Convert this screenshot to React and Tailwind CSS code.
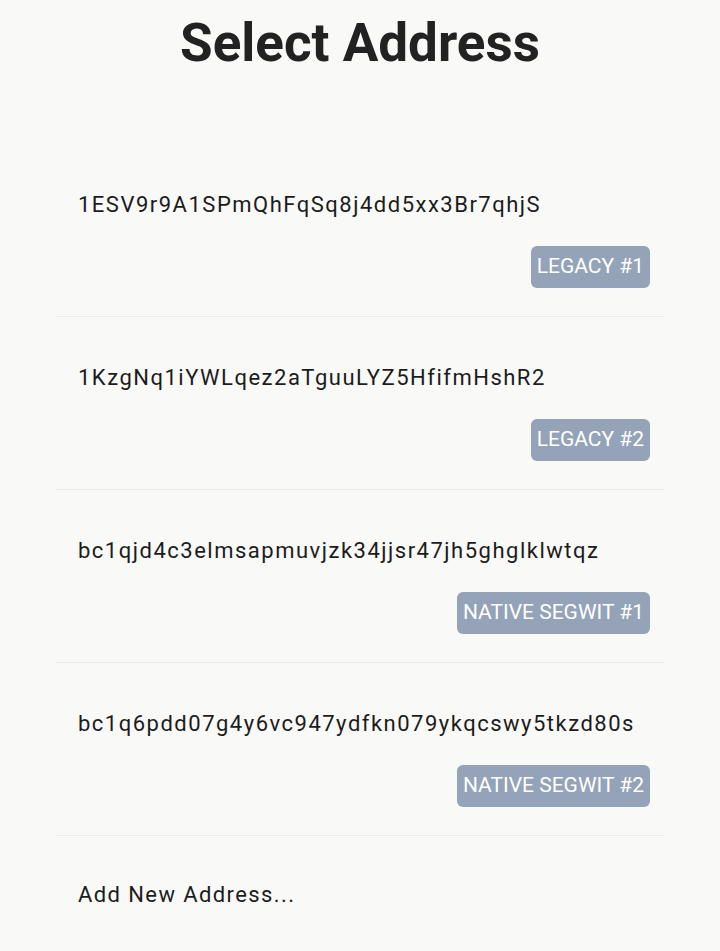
import React from 'react';

const addresses = [
    { address: '1ESV9r9A1SPmQhFqSq8j4dd5xx3Br7qhjS', label: 'Legacy #1' },
    { address: '1KzgNq1iYWLqez2aTguuLYZ5HfifmHshR2', label: 'Legacy #2' },
    { address: 'bc1qjd4c3elmsapmuvjzk34jjsr47jh5ghglklwtqz', label: 'Native Segwit #1' },
    { address: 'bc1q6pdd07g4y6vc947ydfkn079ykqcswy5tkzd80s', label: 'Native Segwit #2' },
];

function AddressRow({ address, label }) {
    return (
        <li className="border-b border-[#ececec] pt-[47px] pb-[28px] pl-[22px] pr-[14px]">
            <div className="text-[22px] leading-[28px] tracking-[1.5px] text-[#1c1c1c]">{address}</div>
            <div className="mt-[27px] flex justify-end">
                <span className="h-[42px] px-[6px] flex items-center rounded-md bg-[#94a3b8] text-white text-[21px] uppercase">
                    {label}
                </span>
            </div>
        </li>
    );
}

export default function App() {
    return (
        <div className="min-h-[951px] bg-[#f9f9f8] font-['Roboto',sans-serif]">
            <h1 className="pt-[10px] h-[144px] text-center text-[53px] leading-[66px] font-bold text-[#222222]">
                Select Address
            </h1>
            <ul className="mx-[56px]">
                {addresses.map((a) => (
                    <AddressRow key={a.address} {...a} />
                ))}
                <li className="pl-[22px] pt-[44px] text-[22px] leading-[30px] tracking-[1.4px] text-[#1c1c1c]">
                    Add New Address...
                </li>
            </ul>
        </div>
    );
}
